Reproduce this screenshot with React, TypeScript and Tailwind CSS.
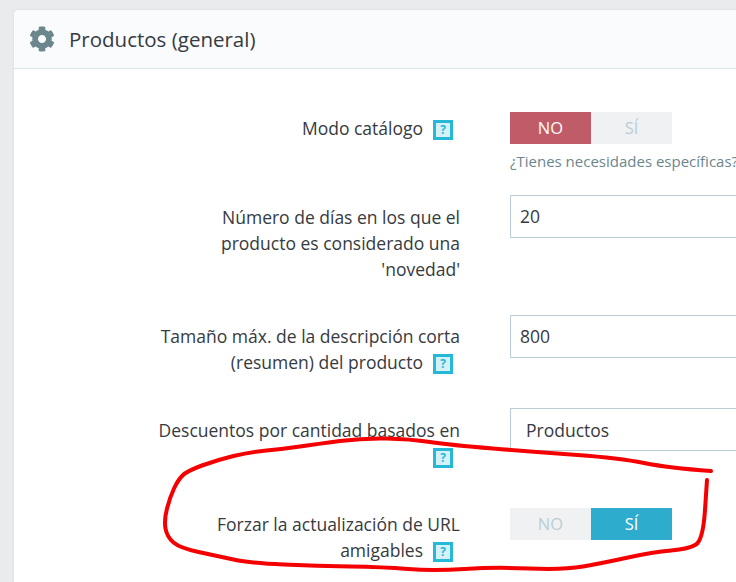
import React from "react";
import { FaCog } from "react-icons/fa";

// hand drawn marker round the last row, traced from the picture
const MARKER: [number, number][] = [
  [711, 471], [669, 468], [619, 458], [536, 452], [450, 445], [410, 439], [363, 438], [317, 444],
  [283, 449], [250, 452], [217, 460], [187, 471], [178, 480], [170, 497], [164, 520], [167, 537],
  [180, 548], [217, 556], [250, 563], [317, 566], [383, 567], [433, 571], [496, 567], [563, 570],
  [603, 563], [653, 552], [689, 549], [703, 540], [707, 480],
];

function markerPath() {
  let d = `M${MARKER[0][0]} ${MARKER[0][1]}`;
  for (let i = 1; i < MARKER.length - 1; i++) {
    const [x, y] = MARKER[i];
    const [nx, ny] = MARKER[i + 1];
    d += ` Q${x} ${y} ${(x + nx) / 2} ${(y + ny) / 2}`;
  }
  const last = MARKER[MARKER.length - 1];
  return `${d} L${last[0]} ${last[1]}`;
}

function Help() {
  return (
    <span className="ml-2.5 mr-[7px] inline-flex h-5 w-5 items-center justify-center border-[3px] border-[#25b9d7] bg-[#d4f1f7] align-middle text-xs font-bold leading-none text-[#25b9d7]">
      ?
    </span>
  );
}

function Toggle({ on }: { on: boolean }) {
  return (
    <div className="flex h-8 w-[162px] text-[16.5px] leading-8">
      <div className={`w-[81px] text-center ${on ? "bg-[#eff1f2] text-[#bbcdd2]" : "bg-[#c05c67] text-white"}`}>NO</div>
      <div className={`w-[81px] text-center ${on ? "bg-[#2eacce] text-white" : "bg-[#eff1f2] text-[#bbcdd2]"}`}>SÍ</div>
    </div>
  );
}

function Row({ label, help, pad, className, children }: {
  label: React.ReactNode;
  help?: boolean;
  pad: string;
  className: string;
  children: React.ReactNode;
}) {
  return (
    <div className={`flex ${className}`}>
      <div className={`w-[446px] shrink-0 text-right text-[17.5px] leading-[26px] ${pad}`}>
        {label}
        {help && <Help />}
      </div>
      <div className="ml-[50px] w-[400px] shrink-0">{children}</div>
    </div>
  );
}

function Field({ value, extra }: { value: string; extra?: string }) {
  return (
    <div className={`flex h-[43px] items-center border border-[#bbcdd2] bg-white text-[17.5px] text-[#363a41] ${extra ?? "pl-[9px]"}`}>
      {value}
    </div>
  );
}

export default function App() {
  return (
    <div className="relative h-[582px] w-[736px] overflow-hidden bg-[#e9ebec] pl-3.5 pt-2.5 font-['Open_Sans',sans-serif] text-base text-[#363a41]">
      <div className="h-[600px] w-[800px] rounded-[5px] bg-white shadow-[0_0_3px_rgba(0,0,0,0.08)]">
        <div className="flex h-[59px] items-center rounded-t-[5px] border-b border-[#dbe6e9] bg-[#fafbfc] pl-[15px]">
          <FaCog className="h-[26px] w-[26px] text-[#6c868e]" />
          <h2 className="ml-3.5 pt-px text-[20.5px] font-medium text-[#363a41]">Productos (general)</h2>
        </div>
        <div className="pt-[43px]">
          <Row label="Modo catálogo" help pad="pt-[3px]" className="h-[83px]">
            <Toggle on={false} />
            <p className="mt-1.5 whitespace-nowrap text-[15px] text-[#6c868e]">¿Tienes necesidades específicas?</p>
          </Row>
          <Row label={<>Número de días en los que el<br />producto es considerado una<br />'novedad'</>} pad="pt-[9px]" className="mb-[33px]">
            <Field value="20" />
          </Row>
          <Row label={<>Tamaño máx. de la descripción corta<br />(resumen) del producto</>} help pad="pt-2" className="mb-[33px]">
            <Field value="800" />
          </Row>
          <Row label={<>Descuentos por cantidad basados en<br /></>} help pad="pt-[9px]" className="mb-[39px]">
            <Field value="Productos" extra="pl-[15px] pt-px" />
          </Row>
          <Row label={<>Forzar la actualización de URL<br />amigables</>} help pad="pt-[3px]" className="">
            <Toggle on />
          </Row>
        </div>
      </div>
      <svg className="pointer-events-none absolute inset-0" width="736" height="582" fill="none">
        <path d={markerPath()} stroke="#f40000" strokeWidth="4" strokeLinecap="round" strokeLinejoin="round" />
      </svg>
    </div>
  );
}
